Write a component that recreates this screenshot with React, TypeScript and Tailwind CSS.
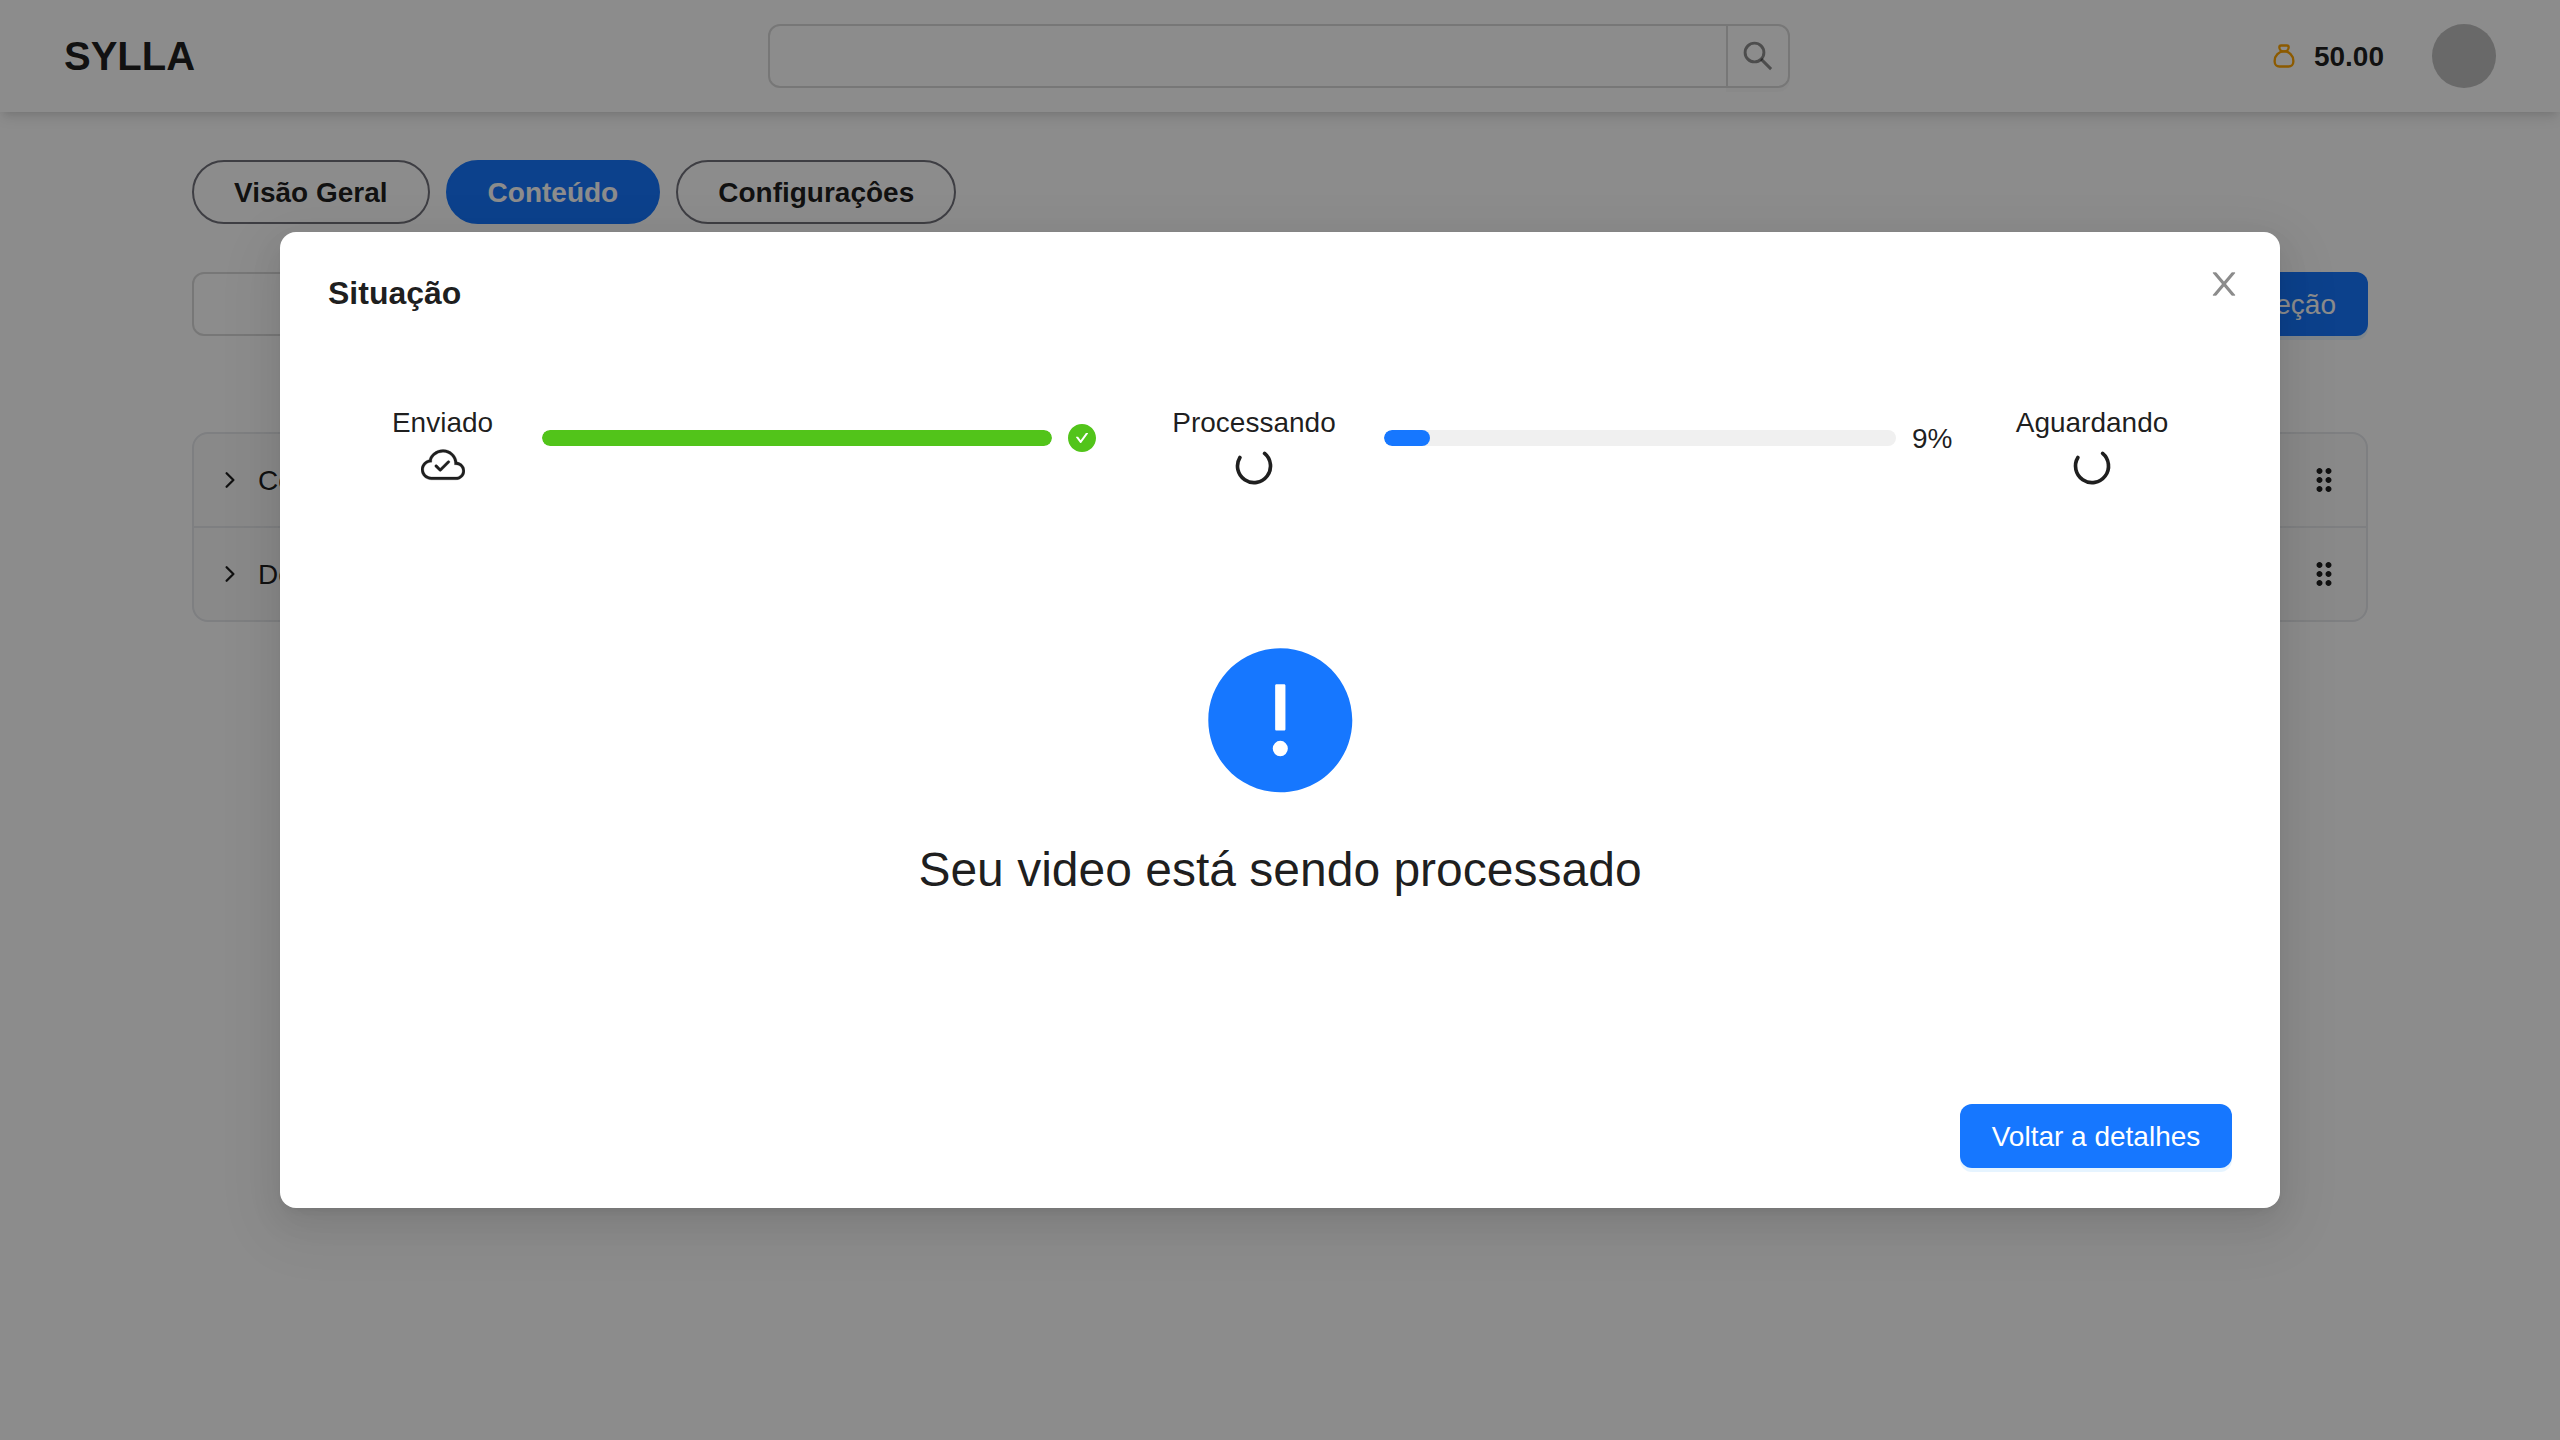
import { AiFillExclamationCircle } from "react-icons/ai";
import { BsCloudCheck } from "react-icons/bs";
import { MdDragIndicator } from "react-icons/md";

const tabs = [
  { label: "Visão Geral", active: false },
  { label: "Conteúdo", active: true },
  { label: "Configuraçôes", active: false },
];

const sections = ["Começo", "Desenvolvimento"];

function MoneyBag() {
  return (
    <svg className="size-7 text-[#ffa500]" viewBox="0 0 24 24" fill="none" stroke="currentColor" strokeWidth="2" strokeLinecap="round" strokeLinejoin="round">
      <path d="M9.5 3h5a1.5 1.5 0 0 1 1.5 1.5a3.5 3.5 0 0 1 -3.5 3.5h-1a3.5 3.5 0 0 1 -3.5 -3.5a1.5 1.5 0 0 1 1.5 -1.5z" />
      <path d="M4 17v-1a8 8 0 1 1 16 0v1a4 4 0 0 1 -4 4h-8a4 4 0 0 1 -4 -4z" />
    </svg>
  );
}

function SearchIcon() {
  return (
    <svg className="size-9" viewBox="0 0 36 36" fill="none" stroke="currentColor" strokeWidth="2.9">
      <circle cx="14.5" cy="14.5" r="9.4" />
      <path d="M21.1 21.1L31.1 31.1" />
    </svg>
  );
}

function CloseIcon() {
  return (
    <svg className="absolute top-[34px] right-[38px] size-9 text-black/45" viewBox="0 0 1024 1024" fill="currentColor" stroke="currentColor" strokeWidth="8">
      <path d="M563.8 512l262.5-312.9c4.4-5.2.7-13.1-6.1-13.1h-79.8c-4.7 0-9.2 2.1-12.3 5.7L511.6 449.8 295.1 191.7c-3-3.6-7.5-5.7-12.3-5.7H203c-6.8 0-10.5 7.9-6.1 13.1L459.4 512 196.9 824.9A7.95 7.95 0 0 0 203 838h79.8c4.7 0 9.2-2.1 12.3-5.7l216.5-258.1 216.5 258.1c3 3.6 7.5 5.7 12.3 5.7h79.8c6.8 0 10.5-7.9 6.1-13.1L563.8 512z" />
    </svg>
  );
}

function CheckCircle() {
  return (
    <svg className="-ml-0.5 size-8 text-[#52c41a]" viewBox="0 0 1024 1024" fill="currentColor">
      <path d="M512 64C264.6 64 64 264.6 64 512s200.6 448 448 448 448-200.6 448-448S759.4 64 512 64zm193.5 301.7l-210.6 292a31.8 31.8 0 0 1-51.7 0L318.5 484.9c-3.8-5.3 0-12.7 6.5-12.7h46.9c10.2 0 19.9 4.9 25.9 13.3l71.2 98.8 157.2-218c6-8.3 15.7-13.3 25.9-13.3H699c6.5 0 10.3 7.4 6.5 12.7z" />
    </svg>
  );
}

function Chevron() {
  return (
    <svg className="size-6" viewBox="0 0 24 24" fill="none" stroke="currentColor" strokeWidth="2.3" strokeLinecap="round" strokeLinejoin="round">
      <path d="M8.6 5.2l6.8 6.8-6.8 6.8" />
    </svg>
  );
}

function Spinner() {
  return (
    <svg className="size-11" viewBox="0 0 44 44" fill="none" stroke="currentColor" strokeWidth="3.67" strokeLinecap="round">
      <path d="M7.9 13.5A16.5 16.5 0 1 0 32.6 9.4" />
    </svg>
  );
}

function Header() {
  return (
    <header className="flex h-28 items-center justify-between bg-white px-16 shadow-[0_8px_12px_-2px_rgba(0,0,0,0.1),0_4px_8px_-4px_rgba(0,0,0,0.1)]">
      <div className="w-[704px] text-[40px] font-bold">SYLLA</div>
      <div className="flex h-16 w-[1022px] -translate-x-px">
        <div className="flex-1 rounded-l-xl border-2 border-[#d9d9d9]" />
        <div className="-ml-0.5 flex w-16 items-center justify-center rounded-r-xl border-2 border-[#d9d9d9] text-black/45 shadow-[0_4px_0_rgba(0,0,0,0.02)]">
          <SearchIcon />
        </div>
      </div>
      <div className="flex w-[704px] items-center justify-end">
        <MoneyBag />
        <span className="ml-4 pt-0.5 text-[28px] font-bold">50.00</span>
        <div className="ml-12 size-16 rounded-full bg-[#bfbfbf]" />
      </div>
    </header>
  );
}

function Progress({ percent, done }: { percent: number; done?: boolean }) {
  return (
    <div className={done ? "ml-px flex h-[76px] w-[582px] items-center" : "flex h-[76px] flex-1 items-center"}>
      <div className="h-4 flex-1 overflow-hidden rounded-full bg-[#f0f0f0]">
        <div className={done ? "h-4 rounded-full bg-[#52c41a]" : "h-4 rounded-full bg-[#1677ff]"} style={{ width: `${percent}%` }} />
      </div>
      <div className="ml-4 w-14 whitespace-nowrap">
        {done ? <CheckCircle /> : <span className="block pt-0.5">{`${percent}%`}</span>}
      </div>
    </div>
  );
}

function Step({ label, width, done }: { label: string; width: string; done?: boolean }) {
  return (
    <div className={`flex flex-col items-center ${width}`}>
      <span className="-mb-0.5 leading-[46px] whitespace-nowrap">{label}</span>
      {done ? <BsCloudCheck size={44} stroke="currentColor" strokeWidth={0.1} /> : <Spinner />}
    </div>
  );
}

function StatusModal() {
  return (
    <div className="absolute inset-0 flex items-start justify-center bg-black/45 pt-[232px]">
      <div className="relative flex h-[976px] w-[2000px] flex-col rounded-2xl bg-white px-12 py-10 shadow-[0_12px_32px_0_rgba(0,0,0,0.08),0_6px_12px_-8px_rgba(0,0,0,0.12),0_18px_56px_16px_rgba(0,0,0,0.05)]">
        <CloseIcon />
        <h2 className="text-[32px] leading-[42px] font-bold">Situação</h2>
        <div className="mt-[86px] flex h-[88px] items-start gap-12 px-16">
          <Step label="Enviado" width="w-[101px]" done />
          <Progress percent={100} done />
          <Step label="Processando" width="w-[164px]" />
          <Progress percent={9} />
          <Step label="Aguardando" width="w-[152px]" />
        </div>
        <div className="mt-[149.7px] flex flex-col items-center">
          <AiFillExclamationCircle className="size-[164.6px] text-[#1677ff]" />
          <p className="mt-[35.7px] text-[48px] leading-[64px]">Seu video está sendo processado</p>
        </div>
        <button className="mt-auto h-16 w-[272px] self-end rounded-xl bg-[#1677ff] pt-0.5 text-white shadow-[0_4px_0_rgba(5,145,255,0.1)]">
          Voltar a detalhes
        </button>
      </div>
    </div>
  );
}

export default function App() {
  return (
    <div className="relative h-[1440px] w-[2560px] overflow-hidden bg-white font-['Liberation_Sans',sans-serif] text-[28px] leading-[44px] text-black/88">
      <Header />
      <main className="px-48 pt-12">
        <nav className="flex gap-4">
          {tabs.map((t) => (
            <button
              key={t.label}
              className={
                t.active
                  ? "h-16 rounded-full border-2 border-[#1677ff] bg-[#1677ff] px-10 pt-0.5 font-bold text-white"
                  : "h-16 rounded-full border-2 border-zinc-500 px-10 pt-0.5 font-bold"
              }
            >
              {t.label}
            </button>
          ))}
        </nav>
        <div className="mt-12 flex justify-between">
          <div className="h-16 w-[600px] rounded-xl border-2 border-[#d9d9d9]" />
          <button className="h-16 rounded-xl bg-[#1677ff] px-8 pt-0.5 text-white shadow-[0_4px_0_rgba(5,145,255,0.1)]">Nova seção</button>
        </div>
        <div className="mt-24 divide-y-2 divide-[#e5e7eb] rounded-2xl border-2 border-[#e5e7eb] bg-[#fafafa]">
          {sections.map((s) => (
            <div key={s} className="box-content flex h-[92px] items-center px-6">
              <Chevron />
              <span className="ml-4 flex-1 pt-0.5">{s}</span>
              <MdDragIndicator size={36} />
            </div>
          ))}
        </div>
      </main>
      <StatusModal />
    </div>
  );
}
